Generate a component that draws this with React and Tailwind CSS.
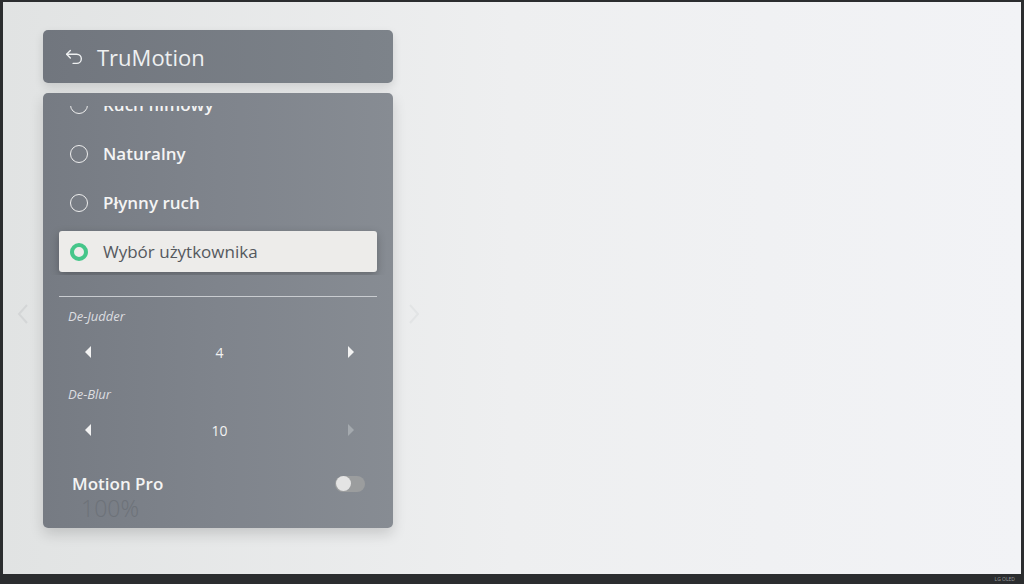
import { useState } from 'react'

// ── TruMotion: меню настройки плавности движения (LG webOS) ──

const OPTIONS = ['Ruch filmowy', 'Naturalny', 'Płynny ruch', 'Wybór użytkownika']

function BackIcon() {
  return (
    <svg width="22" height="22" viewBox="0 0 24 24" fill="none" stroke="currentColor" strokeWidth="1.5" strokeLinecap="round" strokeLinejoin="round">
      <path d="M8 5 4 9l4 4" />
      <path d="M4 9h11a5 5 0 0 1 0 10h-4" />
    </svg>
  )
}

function Tri({ dir, dim }) {
  return (
    <svg width="8" height="14" viewBox="0 0 8 14" className={dim ? 'text-[#a4a9ae]' : 'text-[#f2f2f2]'}>
      {dir === 'left' ? <path d="M7 1 L1 7 L7 13 Z" fill="currentColor" /> : <path d="M1 1 L7 7 L1 13 Z" fill="currentColor" />}
    </svg>
  )
}

function Stepper({ label, value, rightDim }) {
  return (
    <div className="mb-[6px]">
      <div className="h-[20px] pl-[25px] text-[13px] italic text-[#dcdde0] leading-[20px]">{label}</div>
      <div className="h-[52px] flex items-center pl-[41px] pr-[38px]">
        <Tri dir="left" />
        <div className="flex-1 text-center text-[14px] text-[#f2f2f2]">{value}</div>
        <Tri dir="right" dim={rightDim} />
      </div>
    </div>
  )
}

export default function App() {
  const [selected] = useState(3)

  return (
    <div
      className="w-[1024px] h-[584px] bg-[#2b2d2f] pt-[2px] pl-[3px] pr-[3px] overflow-hidden"
      style={{ fontFamily: '"Open Sans", "Noto Sans", sans-serif' }}
    >
      <div className="relative h-[572px] bg-linear-to-r from-[#e1e3e3] via-[#eeeff0] to-[#f2f3f6] pl-[40px] pt-[28px]">
        {/* side chevrons */}
        <div className="absolute left-[14px] top-[301px] text-[#d4d6d7]">
          <svg width="12" height="22" viewBox="0 0 12 22" fill="none" stroke="currentColor" strokeWidth="2"><path d="M10 2 2 11l8 9" /></svg>
        </div>
        <div className="absolute left-[405px] top-[301px] text-[#e2e4e5]">
          <svg width="12" height="22" viewBox="0 0 12 22" fill="none" stroke="currentColor" strokeWidth="2"><path d="M2 2l8 9-8 9" /></svg>
        </div>

        <div className="w-[350px] flex flex-col gap-[10px]">
          {/* header */}
          <div className="h-[53px] rounded-[5px] bg-linear-to-r from-[#71767e] to-[#7d838a] shadow-[0_4px_10px_rgba(0,0,0,0.12)] flex items-center pl-[20px] gap-[12px] text-[#eef0f1]">
            <BackIcon />
            <span className="text-[22px] leading-none">TruMotion</span>
          </div>

          {/* body */}
          <div className="h-[435px] rounded-[5px] bg-linear-to-r from-[#767b83] via-[#7f848c] to-[#878c93] shadow-[0_6px_14px_rgba(0,0,0,0.15)] pt-[13px] relative">
            <div className="h-[169px] overflow-hidden">
              <div className="-mt-[26px] flex flex-col">
                {OPTIONS.map((o, i) => (
                  <div key={o} className="h-[49px] px-[16px] flex items-center">
                    {i === selected ? (
                      <div className="w-full h-[41px] rounded-[3px] bg-[#edecea] shadow-[0_3px_8px_rgba(0,0,0,0.25)] flex items-center pl-[11px] gap-[15px]">
                        <span className="w-[18px] h-[18px] rounded-full border-[4px] border-[#45c68a]" />
                        <span className="text-[17px] text-[#55595e]">{o}</span>
                      </div>
                    ) : (
                      <div className="w-full flex items-center pl-[11px] gap-[15px]">
                        <span className="w-[18px] h-[18px] rounded-full border-[1.5px] border-[#eeeeee]" />
                        <span className="text-[17px] font-semibold text-[#f4f4f4]">{o}</span>
                      </div>
                    )}
                  </div>
                ))}
              </div>
            </div>

            <div className="mx-[16px] mt-[21px] h-[1px] bg-[#c9ccd0]" />

            <div className="pt-[9px]">
              <Stepper label="De-Judder" value="4" />
              <Stepper label="De-Blur" value="10" rightDim />
            </div>

            <div className="mt-[15px] pl-[29px] pr-[28px] flex items-center justify-between">
              <span className="text-[17px] font-semibold text-[#f4f4f4]">Motion Pro</span>
              <span className="w-[30px] h-[16px] rounded-full bg-[#9b9d9e] flex items-center pl-[1px]">
                <span className="w-[15px] h-[15px] rounded-full bg-[#e4e4e4]" />
              </span>
            </div>
            <div className="pl-[38px] -mt-[2px] text-[23px] font-light text-[#6d7279] leading-[26px]">100%</div>
          </div>
        </div>

        <div className="absolute right-[6px] bottom-[-9px] text-[5px] text-[#9a9c9e]">LG OLED</div>
      </div>
    </div>
  )
}
